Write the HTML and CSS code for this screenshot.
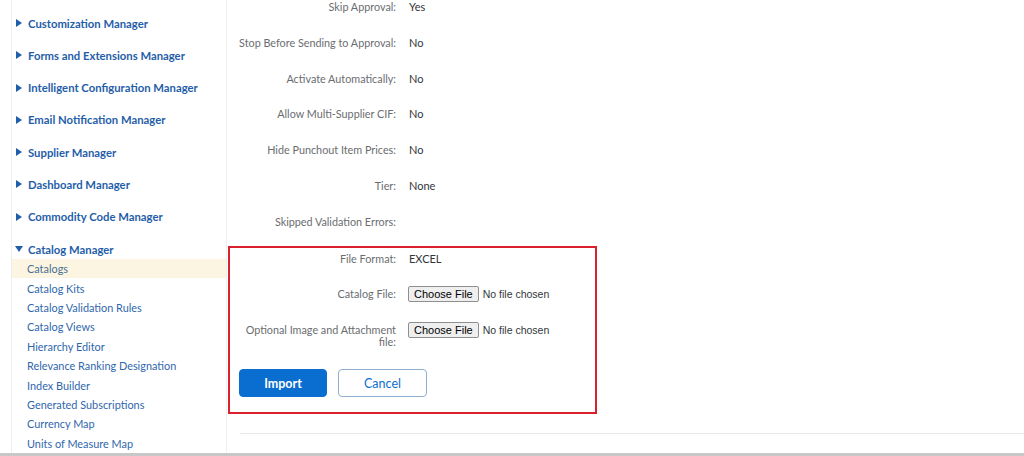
FILE: index.html
```html
<!DOCTYPE html>
<html lang="en">
<head>
    <meta charset="UTF-8">
    <title>Catalog Manager</title>
    <link rel="stylesheet" href="styles.css">
</head>
<body>
    <div class="page">
        <!-- Sidebar -->
        <nav class="sidebar">
            <div class="nav-group"><span class="arrow"></span>Customization Manager</div>
            <div class="nav-group"><span class="arrow"></span>Forms and Extensions Manager</div>
            <div class="nav-group"><span class="arrow"></span>Intelligent Configuration Manager</div>
            <div class="nav-group"><span class="arrow"></span>Email Notification Manager</div>
            <div class="nav-group"><span class="arrow"></span>Supplier Manager</div>
            <div class="nav-group"><span class="arrow"></span>Dashboard Manager</div>
            <div class="nav-group"><span class="arrow"></span>Commodity Code Manager</div>
            <div class="nav-group open"><span class="arrow down"></span>Catalog Manager</div>
            <a class="nav-item active">Catalogs</a>
            <a class="nav-item">Catalog Kits</a>
            <a class="nav-item">Catalog Validation Rules</a>
            <a class="nav-item">Catalog Views</a>
            <a class="nav-item">Hierarchy Editor</a>
            <a class="nav-item">Relevance Ranking Designation</a>
            <a class="nav-item">Index Builder</a>
            <a class="nav-item">Generated Subscriptions</a>
            <a class="nav-item">Currency Map</a>
            <a class="nav-item">Units of Measure Map</a>
        </nav>

        <!-- Contenido -->
        <main class="main">
            <div class="field"><label>Skip Approval:</label><span>Yes</span></div>
            <div class="field"><label>Stop Before Sending to Approval:</label><span>No</span></div>
            <div class="field"><label>Activate Automatically:</label><span>No</span></div>
            <div class="field"><label>Allow Multi-Supplier CIF:</label><span>No</span></div>
            <div class="field"><label>Hide Punchout Item Prices:</label><span>No</span></div>
            <div class="field"><label>Tier:</label><span>None</span></div>
            <div class="field"><label>Skipped Validation Errors:</label><span></span></div>

            <section class="import-box">
                <div class="field"><label>File Format:</label><span>EXCEL</span></div>
                <div class="field"><label>Catalog File:</label><span><input type="file" class="file"></span></div>
                <div class="field"><label>Optional Image and Attachment<br>file:</label><span><input type="file" class="file"></span></div>
                <div class="actions">
                    <button class="btn primary">Import</button>
                    <button class="btn secondary">Cancel</button>
                </div>
            </section>

            <hr class="divider">
        </main>
    </div>
</body>
</html>
```

FILE: styles.css
```css
/* Base */
body {
    margin: 0;
    font-family: Lato, "Open Sans", Arial, sans-serif;
    background: #fff;
    overflow: hidden;
}

.page {
    display: flex;
    height: 453px;
    border-bottom: 3px solid #c8c8c8;
    overflow: hidden;
}

/* Sidebar */
.sidebar {
    width: 214px;
    flex: none;
    margin-left: 11px;
    border-left: 1px solid #eeeeee;
    border-right: 1px solid #f0f0f0;
    padding-top: 13px;
    box-sizing: content-box;
}

.nav-group {
    display: flex;
    align-items: center;
    height: 20px;
    margin-bottom: 12.3px;
    padding-left: 4px;
    font-size: 11.3px;
    font-weight: 700;
    color: #1f5ea8;
    white-space: nowrap;
}

.nav-group.open {
    margin-bottom: 0;
}

.arrow {
    width: 0;
    height: 0;
    border-top: 4px solid transparent;
    border-bottom: 4px solid transparent;
    border-left: 6px solid #1f5ea8;
    margin-right: 6px;
}

.arrow.down {
    border-left: 4px solid transparent;
    border-right: 4px solid transparent;
    border-top: 6px solid #1f5ea8;
    border-bottom: 0;
    margin-left: -1px;
    margin-right: 5px;
}

.nav-item {
    display: flex;
    align-items: center;
    height: 19.4px;
    padding-left: 15px;
    font-size: 10.9px;
    color: #2f67ad;
    cursor: pointer;
    white-space: nowrap;
}

.nav-item.active {
    background-color: #fcf5e1;
    color: #4a6f96;
}

/* Main */
.main {
    flex: 1;
    padding-left: 1px;
    margin-top: -1px;
}

.field {
    display: flex;
    align-items: flex-start;
    font-size: 10.8px;
    line-height: 16px;
    margin-bottom: 19.8px;
}

.field label {
    width: 168px;
    text-align: right;
    color: #6a6d70;
    flex: none;
    white-space: nowrap;
}

.field span {
    margin-left: 13px;
    color: #32363a;
    font-size: 11px;
}

.import-box {
    width: 356px;
    border: 2px solid #d9202c;
    margin-top: -4px;
    padding: 3px 0 15px 9px;
}

.import-box .field label {
    width: 157px;
    line-height: 12px;
    padding-top: 2px;
}

.import-box .field:nth-child(3) {
    margin-bottom: 0;
}

.file {
    font-family: "Liberation Sans", Arial, sans-serif;
    font-size: 10.5px;
    color: #32363a;
    margin-left: -1px;
    margin-top: -1px;
}

.file::file-selector-button {
    font-family: "Liberation Sans", Arial, sans-serif;
    font-size: 11px;
    padding: 1px 5px;
    margin-right: 4px;
    border: 1px solid #8f8f8f;
    border-radius: 2px;
    background: #efefef;
}

.actions {
    display: flex;
    gap: 11px;
    margin-top: 21px;
}

.btn {
    height: 28px;
    width: 88px;
    border-radius: 4px;
    font-family: Lato, "Open Sans", Arial, sans-serif;
    font-size: 12.5px;
    cursor: pointer;
}

.btn.primary {
    background: #0a6ed1;
    border: 1px solid #0a6ed1;
    color: #fff;
    font-weight: 700;
}

.btn.secondary {
    width: 89px;
    background: #fff;
    border: 1px solid #8fb0d3;
    color: #0a6ed1;
}

.divider {
    border: 0;
    border-top: 1px solid #e8e8e8;
    margin: 19px 0 0 12px;
}
```
